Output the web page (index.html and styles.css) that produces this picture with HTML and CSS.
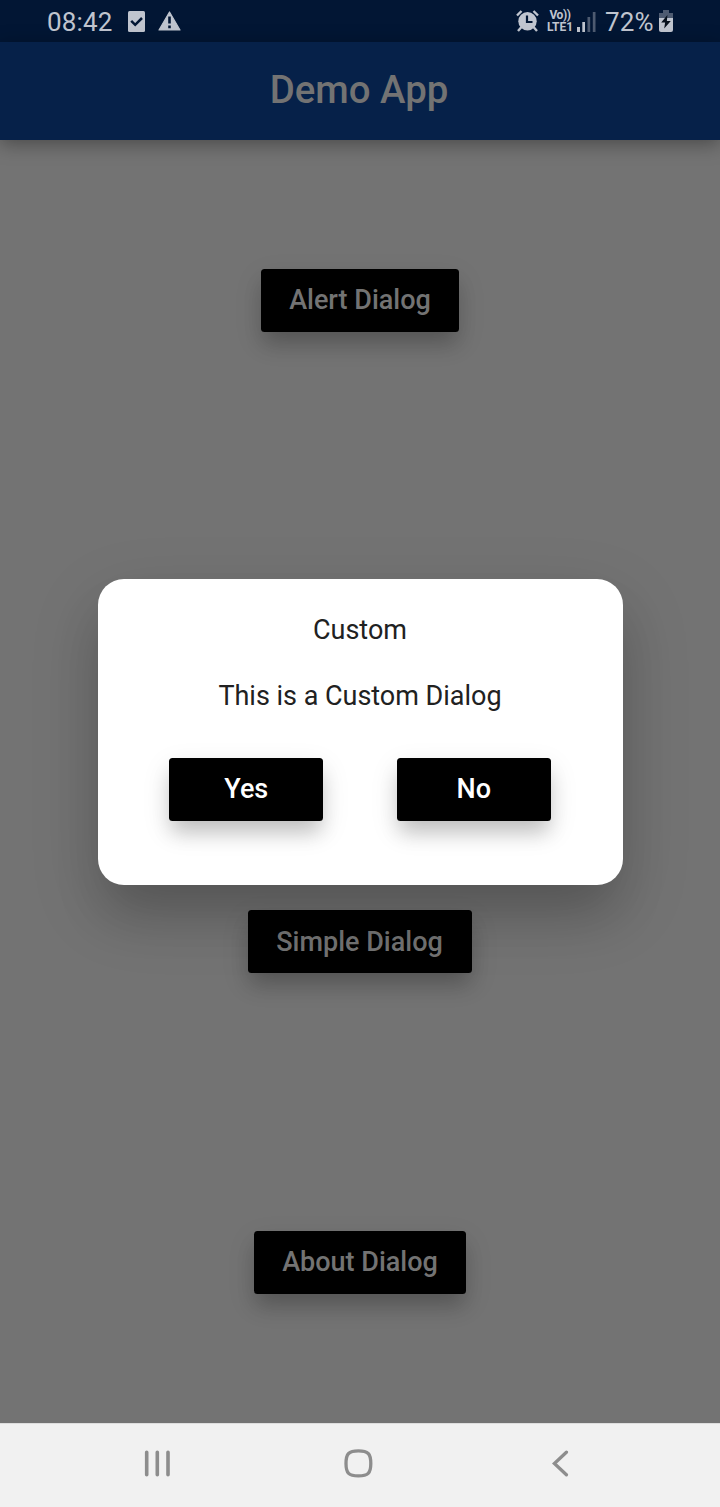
FILE: index.html
```html
<!DOCTYPE html>
<html lang="en">
<head>
<meta charset="utf-8">
<title>Demo App</title>
<link rel="stylesheet" href="styles.css">
</head>
<body>
<div class="screen">
  <div class="status">
    <span class="clock">08:42</span>
    <svg class="task" width="17" height="21" viewBox="0 0 17 21"><rect width="17" height="21" rx="1.5" fill="#c0c5cf"/><path d="M3.2 9.8l4 4 6.8-6.8" fill="none" stroke="#021634" stroke-width="2.5"/></svg>
    <svg class="warn" width="23" height="20" viewBox="0 0 23 20"><path d="M11.5 1L22 19H1z" fill="#c0c5cf" stroke="#c0c5cf" stroke-width="1.2" stroke-linejoin="round"/><path d="M11.5 5.5v7M11.5 14.5v2.8" stroke="#021634" stroke-width="2.6"/></svg>
    <svg class="alarm" width="23" height="22" viewBox="0 0 23 22"><circle cx="11.5" cy="11.2" r="9.2" fill="#c0c5cf"/><path d="M1 5.5L5.5 1M22 5.5L17.5 1M5.5 17l-3.5 4M17.5 17l3.5 4" stroke="#c0c5cf" stroke-width="2.4"/><path d="M11 5.5v6.5h5.5" fill="none" stroke="#021634" stroke-width="2.2"/></svg>
    <span class="volte"><span class="vo">Vo))</span><span>LTE1</span></span>
    <svg class="signal" width="19" height="21" viewBox="0 0 19 21"><path d="M0 16h3v5H0zM5.3 11h2.7v10H5.3z" fill="#c0c5cf"/><path d="M10.5 6h2.7v15h-2.7zM15.8 1h2.7v20h-2.7z" fill="#4e5b71"/></svg>
    <span class="percent">72%</span>
    <svg class="battery" width="14" height="22" viewBox="0 0 14 22"><path d="M4 0h6v3h4v6H0V3h4z" fill="#4e5b71"/><path d="M0 8h14v12a2 2 0 0 1-2 2H2a2 2 0 0 1-2-2z" fill="#c0c5cf"/><path d="M8.4 5L2.2 12.5h3.9L5.2 18.5 11.8 11H7.9z" fill="#07101c"/></svg>
  </div>
  <header class="appbar">Demo App</header>
  <main class="content">
    <div class="slot"><button class="btn dim">Alert Dialog</button></div>
    <div class="slot"></div>
    <div class="slot"><button class="btn dim wide">Simple Dialog</button></div>
    <div class="slot"><button class="btn dim">About Dialog</button></div>
  </main>
  <nav class="navbar">
    <svg class="recents" width="26" height="28" viewBox="0 0 26 28"><path d="M2.7 2.2v22.6M13.3 2.2v22.6M24 2.2v22.6" stroke="#8d8d8d" stroke-width="3.6" stroke-linecap="round"/></svg>
    <svg class="home" width="30" height="30" viewBox="0 0 30 30"><path d="M15.4 1.9C25 1.9 27.8 4.7 27.8 14.5S25 26.9 15.4 26.9 3 24.3 3 14.5 5.8 1.9 15.4 1.9z" fill="none" stroke="#8d8d8d" stroke-width="3.3"/></svg>
    <svg class="back" width="18" height="28" viewBox="0 0 18 28"><path d="M15.4 2.2L3.4 13.5l12 11.3" fill="none" stroke="#8d8d8d" stroke-width="3.3" stroke-linecap="round"/></svg>
  </nav>
  <div class="overlay">
    <section class="dialog">
      <p class="title">Custom</p>
      <p class="message">This is a Custom Dialog</p>
      <div class="actions"><button class="btn">Yes</button><button class="btn">No</button></div>
    </section>
  </div>
</div>
</body>
</html>
```
FILE: styles.css
```css
* { box-sizing: border-box; }
body { margin: 0; font-family: Roboto, sans-serif; }
.screen { position: relative; width: 720px; height: 1507px; display: flex; flex-direction: column; background: #737373; overflow: hidden; }
.status { height: 42px; background: #021634; color: #c0c5cf; display: flex; align-items: flex-start; padding: 0 47px; z-index: 1; }
.status svg { flex: none; }
.clock { width: 81px; font-size: 26px; line-height: 30px; padding-top: 7px; letter-spacing: .15px; }
.task { margin-top: 11px; }
.warn { margin: 11px 0 0 13px; }
.alarm { margin: 10px 0 0 335px; }
.volte { width: 28px; margin: 9px 3px 0 7px; font-size: 12px; line-height: 12px; font-weight: 700; display: flex; flex-direction: column; align-items: center; }
.vo { letter-spacing: -.4px; }
.signal { margin-top: 11px; }
.percent { width: 54px; padding: 7px 0 0 9px; font-size: 26px; line-height: 30px; letter-spacing: .15px; white-space: nowrap; }
.battery { margin: 10px 0 0 auto; }
.appbar { height: 98px; padding-right: 2px; background: #062149; color: #737373; font-size: 38.4px; font-weight: 500; line-height: 96px; text-align: center; box-shadow: 0 4px 18px rgba(0,0,0,.36); z-index: 1; }
.content { flex: 1; display: flex; flex-direction: column; }
.slot { flex: 1; display: flex; align-items: center; justify-content: center; }
.btn { border: 0; border-radius: 3.5px; height: 63px; padding: 0 28px; min-width: 154px; background: #000; color: #fff; font-family: inherit; font-size: 27px; font-weight: 500; line-height: 63px; box-shadow: 0 14px 20px -3px rgba(0,0,0,.18), 0 10px 28px 1px rgba(0,0,0,.1); }
.dim { color: #737373; }
.wide { padding: 0 29px 0 28px; line-height: 64px; }
.navbar { height: 84px; background: #f1f1f1; display: flex; align-items: flex-start; padding: 0 144px; border-top: 1px solid #ddd; }
.recents { margin-top: 26px; }
.home { margin: 25px 0 0 173px; }
.back { margin: 26px 0 0 178px; }
.overlay { position: absolute; top: 42px; left: 0; right: 0; bottom: 85px; display: flex; align-items: center; justify-content: center; z-index: 2; }
.dialog { width: 525px; height: 306px; border-radius: 26px; background: #fff; padding: 35px 35px 0; text-align: center; color: #212121; box-shadow: 0 34px 50px -8px rgba(0,0,0,.17), 0 24px 70px 2px rgba(0,0,0,.13); }
.title, .message { margin: 0; font-size: 27px; line-height: 32px; }
.message { margin-top: 34px; letter-spacing: -.02px; }
.actions { margin-top: 45.5px; display: flex; justify-content: space-around; }
```
